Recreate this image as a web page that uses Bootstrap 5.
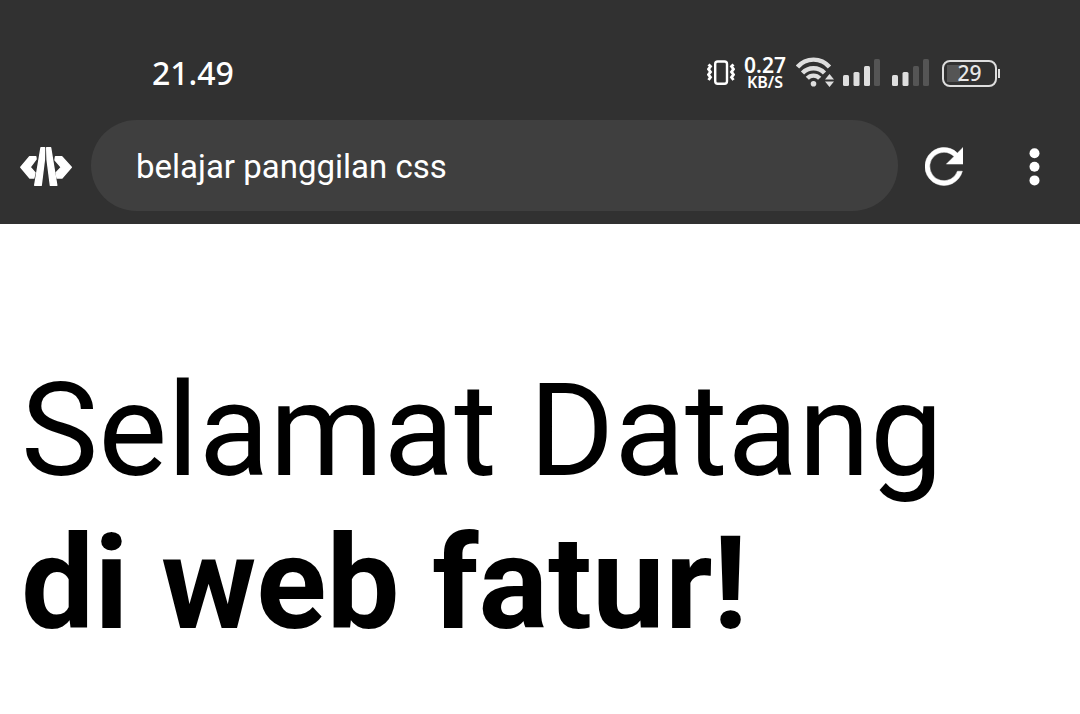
<!DOCTYPE html>
<html lang="id">
<head>
<meta charset="utf-8">
<meta name="viewport" content="width=device-width, initial-scale=1">
<title>belajar panggilan css</title>
<link href="https://cdn.jsdelivr.net/npm/bootstrap@5.3.0/dist/css/bootstrap.min.css" rel="stylesheet">
<style>
  body { font-family: Roboto, sans-serif; background: #fff; color: #000; }
  .browser-top { background: #313131; color: #fff; padding-bottom: 13px; }
  .status-bar { padding: 50px 80px 24px 152px; height: 120px; font-family: "Noto Sans", sans-serif; font-weight: 500; }
  .clock { font-size: 32px; line-height: 44px; }
  .net-rate { text-align: center; margin: 0 9px 0 8px; width: 44px; font-weight: 600; }
  .net-rate span { display: block; font-size: 21px; line-height: 18px; }
  .net-rate .rate-unit { font-size: 16px; line-height: 16px; }
  .status-icons svg { display: block; flex: none; }
  .battery { width: 55px; height: 27px; border: 2px solid #dedede; border-radius: 8px; font-size: 21px; line-height: 22px; color: #e6e6e6; background: linear-gradient(#555, #555) 3px 3px / 13px 17px no-repeat; margin-left: 13px; }
  .battery-tip { width: 2px; height: 9px; background: #dedede; margin-left: 1px; }
  .signal-second { margin-left: 11px; }
  .brand-link { padding: 0 19px 0 20px; }
  .address, .address:focus { height: 91px; background: #3f3f3f; border: 0; color: #fff; font-size: 33px; line-height: 40px; padding: 2px 45px 0; box-shadow: none; }
  .tool-btn { width: 91px; height: 91px; border: 0; flex: none; }
  .welcome { padding: 130px 21px 76px; font-size: 130px; line-height: 153px; }
</style>
</head>
<body>
<header class="browser-top">
  <div class="status-bar d-flex justify-content-between align-items-center">
    <time class="clock">21.49</time>
    <div class="status-icons d-flex align-items-center">
      <svg width="28" height="28" viewBox="0 0 28 28" fill="none" stroke="#fff" aria-label="Getar">
        <rect x="8.200" y="2.500" width="11.800" height="22.200" rx="2.500" stroke-width="2.400"/>
        <path d="M1.500 5.500l2 2-2 2.700 2 2.700-2 2.700 2 2.700-2 2.700M26.500 5.500l-2 2 2 2.700-2 2.700 2 2.700-2 2.700 2 2.700" stroke-width="2.800"/>
      </svg>
      <div class="net-rate"><span>0.27</span><span class="rate-unit">KB/S</span></div>
      <svg width="38" height="32" viewBox="0 -1 38 32" fill="none" stroke="#dedede" stroke-width="4.400" aria-label="Wi-Fi">
        <path d="M1.500 9A21 21 0 0 1 33.500 9M6.500 15A15 15 0 0 1 28.500 15M11.300 20.300A8.500 8.500 0 0 1 23.700 20.300"/>
        <circle cx="17.500" cy="25.700" r="2.800" fill="#dedede" stroke="none"/>
        <path d="M33.500 16l4.500 5.500h-9zM33.500 29l4.500-5.500h-9z" fill="#dedede" stroke="none"/>
      </svg>
      <svg class="ms-2" width="38" height="28" viewBox="0 0 38 28" fill="#dedede" aria-label="Sinyal SIM 1">
        <rect x="1" y="16" width="6" height="11" rx="1.500"/><rect x="11.500" y="13" width="6" height="14" rx="1.500"/><rect x="22" y="7" width="6" height="20" rx="1.500"/><rect x="32" y="0" width="6" height="27" rx="1.500" fill="#555"/>
      </svg>
      <svg class="signal-second" width="38" height="28" viewBox="0 0 38 28" fill="#dedede" aria-label="Sinyal SIM 2">
        <rect x="1" y="16" width="6" height="11" rx="1.500"/><rect x="11.500" y="13" width="6" height="14" rx="1.500"/><rect x="22" y="7" width="6" height="20" rx="1.500" fill="#555"/><rect x="32" y="0" width="6" height="27" rx="1.500" fill="#555"/>
      </svg>
      <div class="battery text-center">29</div>
      <div class="battery-tip"></div>
    </div>
  </div>
  <div class="d-flex align-items-center">
    <a href="#" class="brand-link" aria-label="Beranda">
      <svg class="d-block" width="52" height="40" viewBox="0 0 52 40" fill="#fff" stroke="#fff" stroke-width="1.400" stroke-linejoin="round">
        <path d="M21 1.700h3.600l-.2 12-3.200 25.600h-6.500z"/>
        <path d="M26.700 1.700h3.900l6.200 37.600h-6.400l-3.300-25.600z"/>
        <path d="M9.600 10.700h6.200l.3 2.300-5.900 8.200 4.800 5.600-1.200 5.200h-4l-9-10.800z"/>
        <path d="M35.500 10.700h6.300l9.500 10.500-9.300 10.800h-4.900l-1-5.200 5.200-5.600-6.300-7.200z"/>
      </svg>
    </a>
    <input type="text" class="form-control rounded-pill address flex-grow-1" value="belajar panggilan css" aria-label="Judul halaman">
    <button type="button" class="btn tool-btn p-0" aria-label="Muat ulang">
      <svg width="38" height="40" viewBox="4 3.400 16 16.800" fill="#fff" stroke="#fff" stroke-width=".2"><path d="M17.650 6.350A8 8 0 1 0 19.730 14h-2.080A6 6 0 1 1 12 6c1.660 0 3.140.690 4.220 1.780L13 11h7V4z"/></svg>
    </button>
    <button type="button" class="btn tool-btn p-0" aria-label="Menu">
      <svg width="12" height="40" viewBox="0 0 12 40" fill="#fff"><circle cx="5.500" cy="7.200" r="5"/><circle cx="5.500" cy="20.800" r="5"/><circle cx="5.500" cy="34.400" r="5"/></svg>
    </button>
  </div>
</header>
<main>
  <p class="welcome mb-0">Selamat Datang<br><strong>di web fatur!</strong></p>
</main>
<script src="https://cdn.jsdelivr.net/npm/bootstrap@5.3.0/dist/js/bootstrap.bundle.min.js"></script>
</body>
</html>
